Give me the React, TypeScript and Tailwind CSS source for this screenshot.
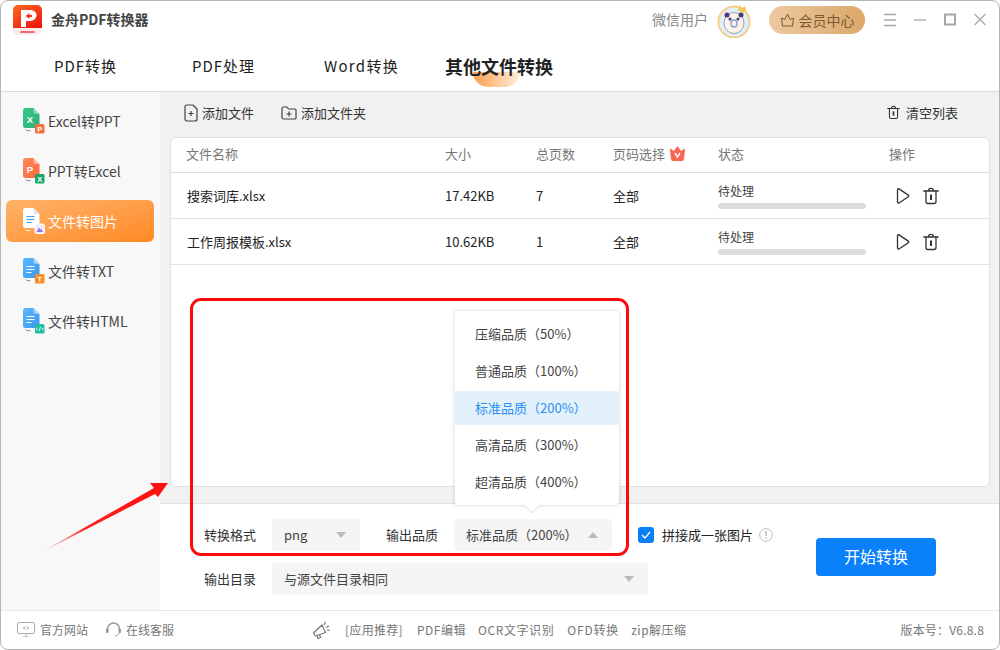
import React from "react";

const font = '"Noto Sans CJK SC", "Noto Sans", sans-serif';

function DocIcon({ color, color2, badge, badgeColor, light }: { color: string; color2: string; badge: string; badgeColor: string; light?: boolean }) {
  return (
    <svg width="26" height="26" viewBox="0 0 26 26" className="shrink-0">
      <defs>
        <linearGradient id={"g" + badge + color} x1="0" y1="0" x2="1" y2="1">
          <stop offset="0" stopColor={color} />
          <stop offset="1" stopColor={color2} />
        </linearGradient>
      </defs>
      <path d="M4.500 0h8l6 6v11.500a2.500 2.500 0 0 1-2.500 2.500H4.500A2.500 2.500 0 0 1 2 17.500v-15A2.500 2.500 0 0 1 4.500 0z" fill={light ? "#fff" : `url(#g${badge}${color})`} />
      <path d="M12.500 0l6 6h-3.500a2.500 2.500 0 0 1-2.500-2.500z" fill={light ? "#dbe9f7" : "#ffffff"} opacity={light ? 1 : 0.45} />
      {badge === "X" || badge === "P" ? (
        <text x="9" y="14.500" fontSize="9.500" fontWeight="700" textAnchor="middle" fill="#fff" fontFamily="Liberation Sans">{badge}</text>
      ) : (
        <g stroke={light ? "#3d9bf2" : "#ffffff"} strokeWidth="1.200">
          <path d="M5.500 8.500h8M5.500 11.500h8M5.500 14.500h5" />
        </g>
      )}
      <path d="M4.500 21.500c1.500 1.400 3 1.500 5 1" stroke={light ? "#fff" : "#888"} strokeWidth="1" fill="none" />
      <rect x="14" y="16" width="9.500" height="9.500" rx="1.500" fill={badgeColor} stroke={light ? "#fff" : "none"} strokeWidth={light ? 1 : 0} />
      {badge === "X" && <text x="18.700" y="23.500" fontSize="7.500" fontWeight="700" textAnchor="middle" fill="#fff" fontFamily="Liberation Sans">P</text>}
      {badge === "P" && <text x="18.700" y="23.500" fontSize="7.500" fontWeight="700" textAnchor="middle" fill="#fff" fontFamily="Liberation Sans">X</text>}
      {badge === "I" && <path d="M15.500 24l2.500-4.500 1.300 2 .8-.8 1.900 3.300z" fill="#9a74e0" />}
      {badge === "T" && <text x="18.700" y="23.500" fontSize="7.500" fontWeight="700" textAnchor="middle" fill="#fff" fontFamily="Liberation Sans">T</text>}
      {badge === "H" && <path d="M16.500 20l-1.200 1 1.200 1M21 20l1.200 1-1.200 1M19.500 19l-1.400 4" stroke="#fff" strokeWidth=".8" fill="none" />}
    </svg>
  );
}

function Play() {
  return (
    <svg width="16" height="18" viewBox="0 0 16 18" fill="none" stroke="#333" strokeWidth="1.300" strokeLinejoin="round">
      <path d="M2.500 2.800c0-.8.800-1.300 1.500-.9l9.300 6.200c.6.400.6 1.300 0 1.700L4 16c-.7.400-1.500-.1-1.500-.9z" />
    </svg>
  );
}

function Trash({ size = 16 }: { size?: number }) {
  return (
    <svg width={size} height={size + 2} viewBox="0 0 16 18" fill="none" stroke="#333" strokeWidth="1.300" strokeLinecap="round" strokeLinejoin="round">
      <path d="M.8 4h14.400M5.500 4c0-1.700.8-2.700 2.500-2.700s2.500 1 2.500 2.700" />
      <path d="M3 4v10.500c0 1.200.8 2 2 2h6c1.200 0 2-.8 2-2V4" />
      <path d="M8 7.500v5.500" strokeWidth="2" strokeLinecap="butt" />
    </svg>
  );
}

function Caret({ up }: { up?: boolean }) {
  return up ? (
    <span className="w-0 h-0 border-x-[5px] border-x-transparent border-b-[6px] border-b-[#bbbbbb]" />
  ) : (
    <span className="w-0 h-0 border-x-[5px] border-x-transparent border-t-[6px] border-t-[#bbbbbb]" />
  );
}

const sideItems = [
  { label: "Excel转PPT", c: "#35c98a", c2: "#2fae76", badge: "X", bc: "#f5703a" },
  { label: "PPT转Excel", c: "#ff8a5c", c2: "#f9683a", badge: "P", bc: "#17a86a" },
  { label: "文件转图片", c: "#fff", c2: "#fff", badge: "I", bc: "#f3e9fb", active: true },
  { label: "文件转TXT", c: "#5cb8ff", c2: "#3c97f0", badge: "T", bc: "#fb8c1f" },
  { label: "文件转HTML", c: "#5cb8ff", c2: "#3c97f0", badge: "H", bc: "#22bfa0" },
];

const rows = [
  { name: "搜索词库.xlsx", size: "17.42KB", pages: "7" },
  { name: "工作周报模板.xlsx", size: "10.62KB", pages: "1" },
];

const options = ["压缩品质（50%）", "普通品质（100%）", "标准品质（200%）", "高清品质（300%）", "超清品质（400%）"];
const cols = "grid grid-cols-[259px_91px_77px_105px_171px_1fr] items-center pl-[15px]";

export default function App() {
  return (
    <div className="relative w-[1000px] h-[650px] bg-white overflow-hidden flex flex-col text-[13px] text-[#333]" style={{ fontFamily: font }}>
      {/* title */}
      <div className="h-[40px] shrink-0 flex items-center pl-[12px] pr-[2px]">
        <svg width="30" height="30" viewBox="0 0 30 30" className="shrink-0 mr-[9px]">
          <defs>
            <linearGradient id="logo" x1="0" y1="0" x2="0.700" y2="1">
              <stop offset="0" stopColor="#ff6a1a" />
              <stop offset="1" stopColor="#f01b12" />
            </linearGradient>
          </defs>
          <rect x="1" y="0" width="29" height="30" rx="5" fill="#fdecec" />
          <path d="M1 5a5 5 0 0 1 5-5h19a5 5 0 0 1 5 5v18H1z" fill="url(#logo)" />
          <path d="M9 5h9c4 0 6.500 2.300 6.500 5.300S22 16 18 16h-4v6H9z" fill="#fff" />
          <path d="M13.500 11l4-3v2h2.500v2h-2.500v2z" fill="#f4351a" />
          <rect x="8" y="26" width="15" height="2" rx="1" fill="#f26b6b" />
        </svg>
        <span className="text-[14px] font-bold text-[#444] mb-[1px]">金舟PDF转换器</span>
        <div className="ml-auto flex items-center">
          <span className="text-[#888] text-[14px] mr-[9px] mb-[1px]">微信用户</span>
          <svg width="34" height="36" viewBox="0 0 34 36" className="mr-[18px]">
            <circle cx="17" cy="20" r="15.500" fill="#dff0f7" stroke="#f6cf8e" strokeWidth="2" />
            <ellipse cx="17" cy="21" rx="10" ry="10.500" fill="#fff2e6" stroke="#7f78b5" strokeWidth=".7" />
            <circle cx="10" cy="13" r="2.500" fill="#4a3a7a" />
            <circle cx="24" cy="13" r="2.500" fill="#4a3a7a" />
            <circle cx="13" cy="17" r="1.500" fill="#4a3a7a" />
            <circle cx="21" cy="17" r="1.500" fill="#4a3a7a" />
            <ellipse cx="17" cy="21.500" rx="3" ry="3.500" fill="none" stroke="#7fa7d8" strokeWidth="1.500" />
            <path d="M21 9l1.500-6 2.500 3 3-2 1 4-2.500 3z" fill="#f5c957" />
          </svg>
          <div className="w-[96px] h-[28px] rounded-full bg-gradient-to-r from-[#ecc9a0] to-[#dca868] flex items-center justify-center gap-[4px] text-[#7a5a32] text-[14px] mr-[19px]">
            <svg width="15" height="14" viewBox="0 0 15 14" fill="none" stroke="#7a5a32" strokeWidth="1" strokeLinejoin="round">
              <path d="M1.500 5l3.300 1.500L7.500 1.200l2.700 5.300L13.500 5l-1 8h-10z" />
            </svg>
            <span>会员中心</span>
          </div>
          <svg width="114" height="14" viewBox="0 0 114 14" fill="none" stroke="#a6a6a6" strokeWidth="1.500">
            <path d="M0 1.500h12M0 7h12M0 12.500h12" />
            <path d="M30 7h12" strokeWidth="1.200" />
            <rect x="61" y="1.500" width="10" height="10" strokeWidth="2" />
            <path d="M90.500 1l11 11M101.500 1l-11 11" strokeWidth="1.200" />
          </svg>
        </div>
      </div>
      {/* tabs */}
      <div className="h-[52px] shrink-0 border-b border-[#dcdcdc] flex items-center pl-[54px] pt-[2px] text-[15px] text-[#222]">
        <span className="w-[138px] tracking-[1px]">PDF转换</span>
        <span className="w-[132px] tracking-[1px]">PDF处理</span>
        <span className="w-[121px] tracking-[1.300px]">Word转换</span>
        <span className="relative text-[18px] font-bold text-[#222]">
          <span className="absolute left-[28px] top-[19px] w-[47px] h-[15px] rounded-b-full bg-gradient-to-r from-[#ff9c45] to-[#ffeedd]" />
          <span className="relative">其他文件转换</span>
        </span>
      </div>
      {/* middle */}
      <div className="flex-1 flex min-h-0">
        <div className="w-[160px] shrink-0 bg-[#f8f8f8] pt-[8px] px-[6px] flex flex-col gap-[8px]">
          {sideItems.map((s) => (
            <div
              key={s.label}
              className={
                s.active
                  ? "h-[42px] rounded-[6px] bg-gradient-to-br from-[#ffb266] to-[#ff8a20] flex items-center pl-[15px] gap-[1px] text-white text-[14px]"
                  : "h-[42px] rounded-[6px] flex items-center pl-[15px] gap-[1px] text-[#444] text-[14px]"
              }
            >
              <DocIcon color={s.c} color2={s.c2} badge={s.badge} badgeColor={s.bc} light={s.active} />
              <span>{s.label}</span>
            </div>
          ))}
        </div>
        <div className="flex-1 min-w-0 flex flex-col bg-[#f1f1f1]">
          <div className="h-[45px] shrink-0 flex items-center pl-[24px] pr-[42px] pb-[4px] text-[13px] text-[#333]">
            <span className="flex items-center gap-[4px] mr-[27px]">
              <svg width="14" height="18" viewBox="0 0 14 18" fill="none" stroke="#444" strokeWidth="1.200" strokeLinejoin="round">
                <path d="M1 3a2 2 0 0 1 2-2h6l4 4v10a2 2 0 0 1-2 2H3a2 2 0 0 1-2-2z" />
                <path d="M7 7v5M4.500 9.500h5" />
              </svg>
              添加文件
            </span>
            <span className="flex items-center gap-[4px]">
              <svg width="16" height="14" viewBox="0 0 16 14" fill="none" stroke="#444" strokeWidth="1.200" strokeLinejoin="round">
                <path d="M1 2.500A1.500 1.500 0 0 1 2.500 1H6l1.500 2H14a1 1 0 0 1 1 1v8a1 1 0 0 1-1 1H2.500A1.500 1.500 0 0 1 1 11.500z" />
                <path d="M8 5.500v5M5.500 8h5" />
              </svg>
              添加文件夹
            </span>
            <span className="ml-auto flex items-center gap-[6px]">
              <Trash size={13} />
              清空列表
            </span>
          </div>
          <div className="h-[350px] shrink-0 ml-[10px] mr-[10px] bg-white border border-[#e1e1e1] rounded-[6px]">
            <div className={cols + " h-[35px] pb-[2px] border-b border-[#dedede] text-[#777]"}>
              <span>文件名称</span>
              <span>大小</span>
              <span>总页数</span>
              <span className="flex items-center gap-[4px]">
                页码选择
                <svg width="17" height="16" viewBox="0 0 17 16">
                  <path d="M1 3.500c0-.6.600-.9 1.100-.6L5 5 7.800.9c.3-.5 1.100-.5 1.400 0L12 5l2.900-2.100c.5-.3 1.100 0 1.100.6l-1 9.500a2 2 0 0 1-2 2H4a2 2 0 0 1-2-2z" fill="#f96650" />
                  <path d="M6 7l2.500 4L11 7" stroke="#fff" strokeWidth="1.500" fill="none" />
                </svg>
              </span>
              <span>状态</span>
              <span>操作</span>
            </div>
            {rows.map((r) => (
              <div key={r.name} className={cols + " h-[46px] border-b border-[#e1e1e1] text-[#222]"}>
                <span className="pl-[1px]">{r.name}</span>
                <span>{r.size}</span>
                <span>{r.pages}</span>
                <span>全部</span>
                <div className="flex flex-col w-[148px]">
                  <span className="text-[12px] leading-[16px] text-[#444]">待处理</span>
                  <div className="h-[6px] rounded-full bg-[#dcdcdc] mt-[4px]" />
                </div>
                <div className="flex items-center gap-[12px] pl-[6px]">
                  <Play />
                  <Trash />
                </div>
              </div>
            ))}
          </div>
          <div className="h-[16px] shrink-0" />
          <div className="flex-1 bg-white border-t border-[#e1e1e1] flex">
            <div className="w-[656px] pl-[44px] pt-[15px] flex flex-col gap-[12px]">
              <div className="flex items-center h-[32px]">
                <span className="w-[68px] text-[#333]">转换格式</span>
                <div className="w-[88px] h-[32px] rounded-[4px] bg-[#f5f5f5] flex items-center justify-between pl-[12px] pr-[14px] text-[#444]">
                  <span>png</span>
                  <Caret />
                </div>
                <span className="w-[68px] ml-[26px] text-[#333]">输出品质</span>
                <div className="w-[158px] h-[32px] rounded-[4px] bg-[#f5f5f5] flex items-center justify-between pl-[12px] pr-[14px] text-[#444]">
                  <span>标准品质（200%）</span>
                  <Caret up />
                </div>
                <span className="ml-[26px] flex items-center">
                  <span className="w-[16px] h-[16px] rounded-[3px] bg-[#0a80f5] flex items-center justify-center mr-[8px]">
                    <svg width="10" height="8" viewBox="0 0 10 8" fill="none" stroke="#fff" strokeWidth="1.300"><path d="M1 4l3 3 5-6" /></svg>
                  </span>
                  <span className="text-[#222] whitespace-nowrap">拼接成一张图片</span>
                  <svg width="14" height="14" viewBox="0 0 14 14" fill="none" stroke="#bdbdbd" className="ml-[6px]">
                    <circle cx="7" cy="7" r="6.300" />
                    <path d="M7 3v5M7 9.500v1.500" strokeWidth="1.500" />
                  </svg>
                </span>
              </div>
              <div className="flex items-center h-[32px]">
                <span className="w-[68px] text-[#333]">输出目录</span>
                <div className="w-[376px] h-[32px] rounded-[4px] bg-[#f5f5f5] flex items-center justify-between pl-[12px] pr-[14px] text-[#444]">
                  <span>与源文件目录相同</span>
                  <Caret />
                </div>
              </div>
            </div>
            <div className="flex-1 flex pt-[34px]">
              <div className="w-[120px] h-[38px] pb-[2px] rounded-[4px] bg-[#0a80fb] text-white text-[16px] flex items-center justify-center">开始转换</div>
            </div>
          </div>
        </div>
      </div>
      {/* footer */}
      <div className="h-[40px] shrink-0 border-t border-[#e8e8e8] flex items-center text-[12px] text-[#777] pl-[17px] pr-[16px] pb-[2px]">
        <svg width="18" height="15" viewBox="0 0 18 15" fill="none" stroke="#aaa" className="mr-[5px]">
          <rect x=".500" y=".500" width="17" height="11" rx="1.500" />
          <path d="M6 15h6M9 12v3" />
          <path d="M8 4.500L6.500 6 8 7.500M10 4.500L11.500 6 10 7.500" stroke="#888" />
        </svg>
        <span className="mr-[17px]">官方网站</span>
        <svg width="17" height="17" viewBox="0 0 17 17" fill="none" stroke="#999" strokeWidth="1.500" className="mr-[4px]">
          <path d="M2.500 10V8a6 6 0 0 1 12 0v2" />
          <rect x="1" y="7.500" width="2.500" height="4.500" rx="1" fill="#999" stroke="none" />
          <rect x="13.500" y="7.500" width="2.500" height="4.500" rx="1" fill="#999" stroke="none" />
          <path d="M14 12c-.5 2-2 3-4 3" strokeWidth="1" />
        </svg>
        <span className="mr-[138px]">在线客服</span>
        <svg width="20" height="20" viewBox="0 0 20 20" fill="none" stroke="#777" strokeWidth="1.200" className="mr-[13px]">
          <path d="M1.500 13L10 5l3.500 7.500L3.500 16z" strokeLinejoin="round" />
          <path d="M5 15.500l1 3 2.500-1-1-3" />
          <path d="M13.500 2l-1.500 3M17 6l-3 1.500M18 10.500l-3-.5" />
        </svg>
        <span className="mr-[14px] tracking-[0.300px]">[应用推荐]</span>
        <span className="mr-[12px] tracking-[0.500px]">PDF编辑</span>
        <span className="mr-[13px] tracking-[0.600px]">OCR文字识别</span>
        <span className="mr-[12px] tracking-[0.800px]">OFD转换</span>
        <span className="tracking-[0.500px]">zip解压缩</span>
        <span className="ml-auto tracking-[0.200px]">版本号：V6.8.8</span>
      </div>

      {/* dropdown overlay */}
      <div className="absolute left-[455px] top-[311px] w-[164px] h-[194px] bg-white rounded-[4px] shadow-[0_0_4px_rgba(120,120,160,0.35)] py-[3px] text-[13px] text-[#444]">
        {options.map((o, i) => (
          <div key={o} className={i === 2 ? "h-[34px] my-[3px] flex items-center pl-[20px] bg-[#e3f1fd] text-[#2b8ff0] rounded-[2px]" : "h-[34px] my-[3px] flex items-center pl-[20px]"}>
            {o}
          </div>
        ))}
        <span className="absolute left-[72px] bottom-[-5px] w-[10px] h-[10px] bg-white rotate-45 shadow-[1px_1px_1px_rgba(120,120,160,0.2)]" />
      </div>

      {/* annotations */}
      <div className="absolute left-[190px] top-[298px] w-[439px] h-[258px] border-[3px] border-[#ff0a0a] rounded-[11px] pointer-events-none" />
      <svg width="140" height="80" viewBox="0 0 140 80" className="absolute left-[35px] top-[478px] pointer-events-none">
        <defs>
          <linearGradient id="arrow" x1="0" y1="1" x2="1" y2="0">
            <stop offset="0" stopColor="#ff5a5a" stopOpacity=".2" />
            <stop offset=".35" stopColor="#ff2020" />
            <stop offset="1" stopColor="#ff1010" />
          </linearGradient>
        </defs>
        <path d="M5 75L119 10 115 5 133 5 123 19 120 16z" fill="url(#arrow)" />
      </svg>

      {/* window border */}
      <div className="absolute inset-0 rounded-[8px] border border-[#b5b5b5] pointer-events-none" />
    </div>
  );
}
